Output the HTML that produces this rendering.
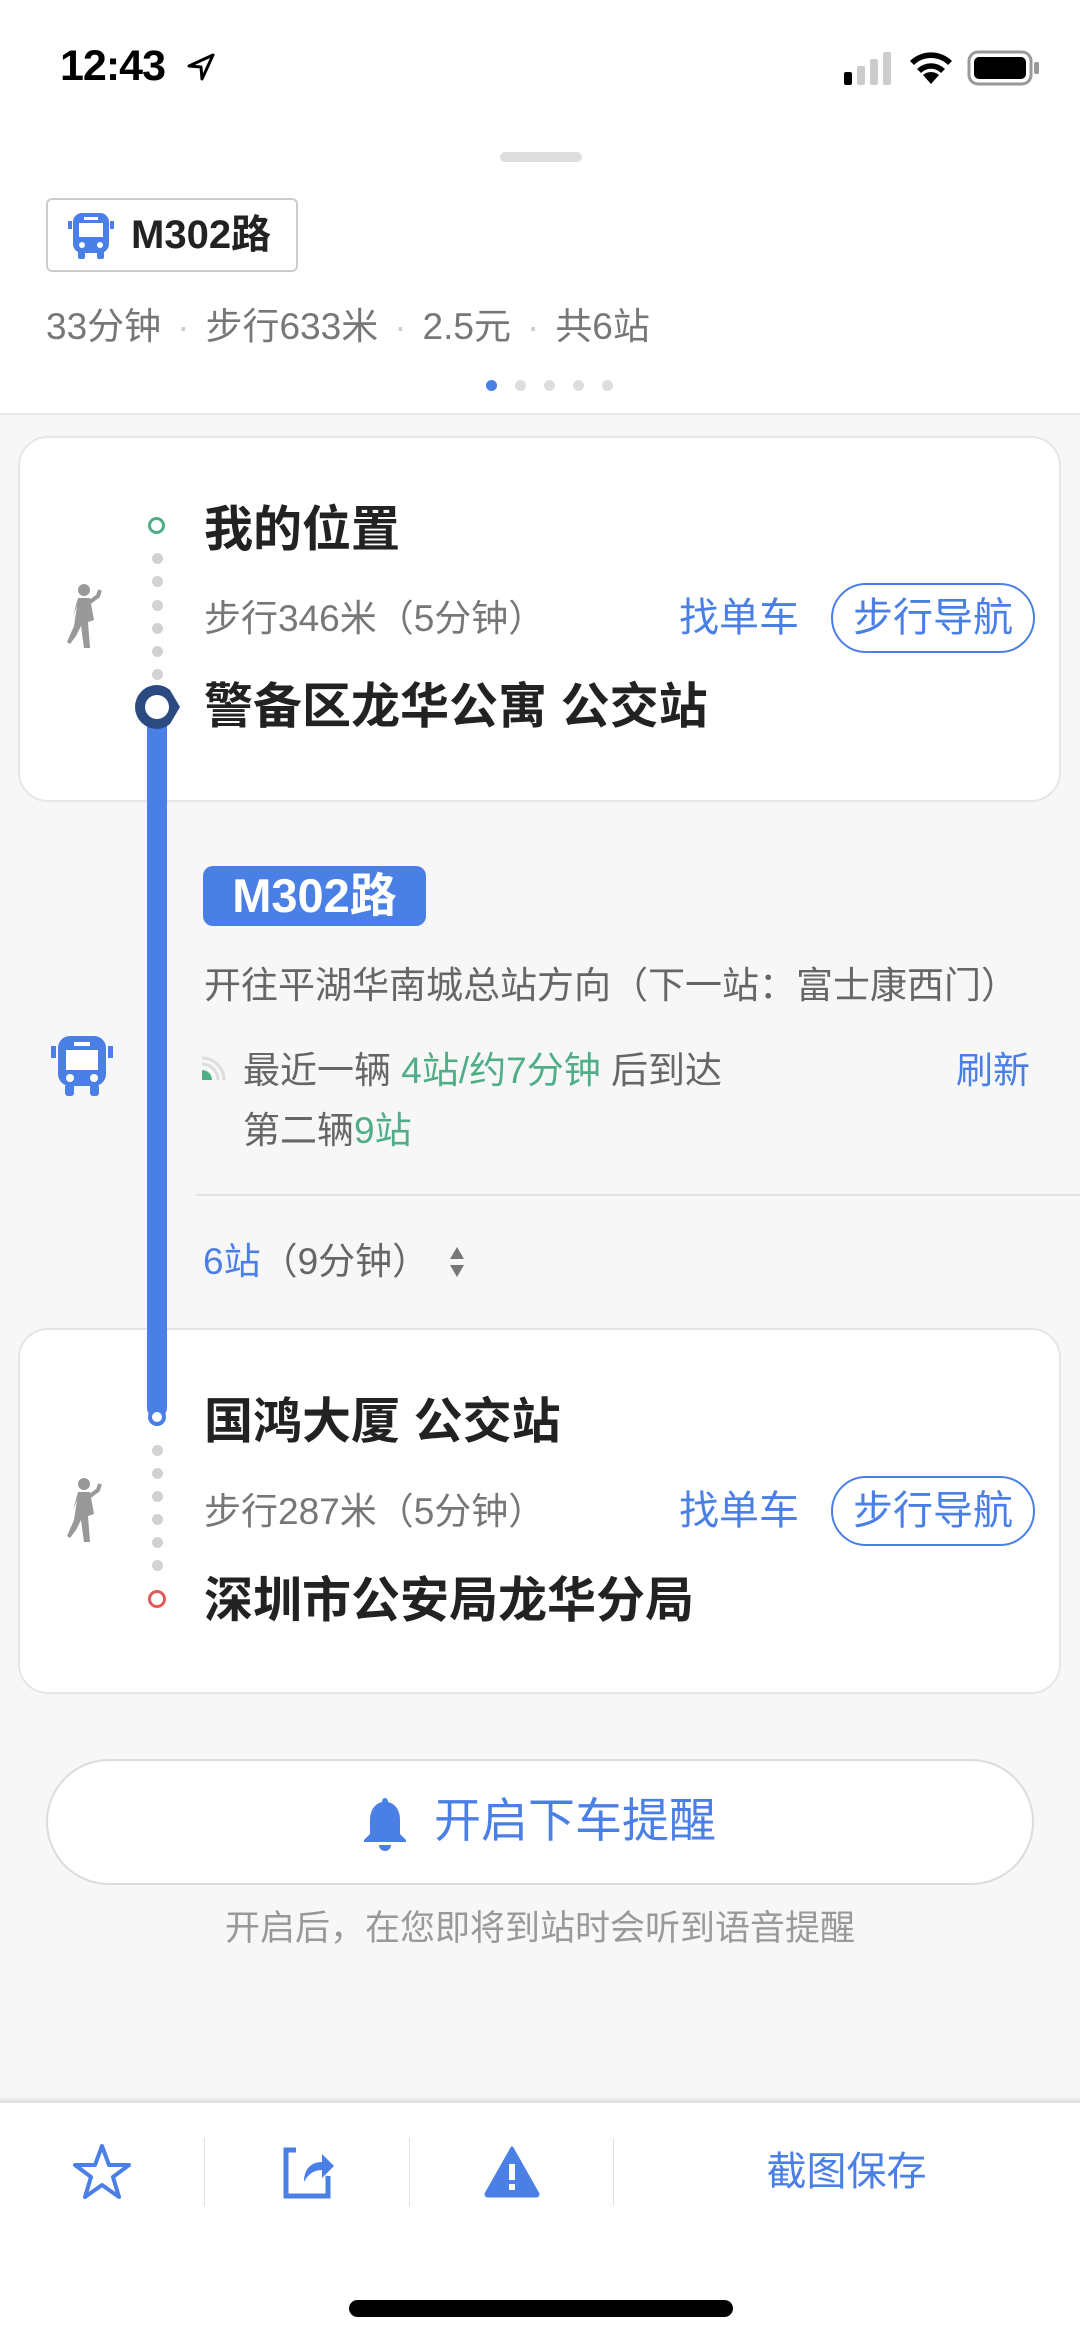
<!DOCTYPE html>
<html><head><meta charset="utf-8"><style>
*{margin:0;padding:0;box-sizing:border-box}
body{width:1080px;height:2339px;position:relative;background:#f7f7f7;font-family:"Liberation Sans","Noto Sans CJK SC",sans-serif;overflow:hidden}
.a{position:absolute;white-space:nowrap}
.t{line-height:60px;height:60px}
.blue{color:#4a7fe6}
.green{color:#4fae87}
.card{position:absolute;left:18px;width:1043px;background:#fff;border:2px solid #e6e6e6;border-radius:30px}
.pill{position:absolute;left:831px;width:204px;height:70px;border:2px solid #4a7fe6;border-radius:35px;color:#4a7fe6;font-size:40px;line-height:66px;text-align:center}
.gd{position:absolute;left:152px;width:11px;height:11px;border-radius:6px;background:#d2d2d2}
.st{font-size:49px;font-weight:bold;color:#222}
</style></head><body>
<div class="a" style="left:0;top:0;width:1080px;height:413px;background:#fff"></div>
<div class="a t" style="left:60px;top:36px;font-size:43px;font-weight:bold;color:#000;letter-spacing:-1px">12:43</div>
<svg class="a" style="left:186px;top:52px" width="30" height="30" viewBox="0 0 30 30"><path d="M27 3 L3 14 L15 15 L16 27 Z" fill="none" stroke="#000" stroke-width="3" stroke-linejoin="round"/></svg>
<svg class="a" style="left:844px;top:50px" width="56" height="36"><rect x="0" y="22" width="8" height="13" rx="2" fill="#000"/><rect x="13" y="16" width="8" height="19" rx="2" fill="#ccc"/><rect x="26" y="9" width="8" height="26" rx="2" fill="#ccc"/><rect x="39" y="2" width="8" height="33" rx="2" fill="#ccc"/></svg>
<svg class="a" style="left:908px;top:48px" width="46" height="38" viewBox="0 0 46 38"><path d="M23 36 L15 27 A12 12 0 0 1 31 27 Z" fill="#000"/><path d="M9 21 A20 20 0 0 1 37 21 L33 25 A14 14 0 0 0 13 25Z" fill="#000"/><path d="M2 13 A30 30 0 0 1 44 13 L40 17 A24 24 0 0 0 6 17Z" fill="#000"/></svg>
<svg class="a" style="left:967px;top:50px" width="74" height="36"><rect x="2" y="2" width="62" height="32" rx="9" fill="none" stroke="#999" stroke-width="3"/><rect x="7" y="7" width="52" height="22" rx="5" fill="#000"/><rect x="67" y="12" width="5" height="12" rx="2" fill="#999"/></svg>
<div class="a" style="left:500px;top:152px;width:82px;height:10px;border-radius:5px;background:#ddd"></div>
<div class="a" style="left:46px;top:198px;width:252px;height:74px;border:2px solid #ccc;border-radius:6px;background:#fff"></div>
<svg class="a" style="left:66px;top:209px" width="50" height="52" viewBox="0 0 50 52"><rect x="7" y="4" width="36" height="40" rx="9" fill="#4a7fe6"/><rect x="13" y="14" width="24" height="14" fill="#fff"/><rect x="18" y="8" width="14" height="3" fill="#fff"/><circle cx="16" cy="36" r="3" fill="#fff"/><circle cx="34" cy="36" r="3" fill="#fff"/><rect x="2" y="12" width="4" height="8" fill="#4a7fe6"/><rect x="44" y="12" width="4" height="8" fill="#4a7fe6"/><rect x="12" y="42" width="7" height="8" rx="2" fill="#4a7fe6"/><rect x="31" y="42" width="7" height="8" rx="2" fill="#4a7fe6"/></svg>
<div class="a t" style="left:131px;top:205px;font-size:40px;font-weight:bold;color:#222">M302路</div>
<div class="a t" style="left:46px;top:297px;font-size:37px;color:#777">33分钟<span style="color:#ccc;padding:0 16px">·</span>步行633米<span style="color:#ccc;padding:0 16px">·</span>2.5元<span style="color:#ccc;padding:0 16px">·</span>共6站</div>
<div class="a" style="left:486px;top:380px;width:11px;height:11px;border-radius:6px;background:#4a7fe6"></div>
<div class="a" style="left:515px;top:380px;width:11px;height:11px;border-radius:6px;background:#ddd"></div>
<div class="a" style="left:544px;top:380px;width:11px;height:11px;border-radius:6px;background:#ddd"></div>
<div class="a" style="left:573px;top:380px;width:11px;height:11px;border-radius:6px;background:#ddd"></div>
<div class="a" style="left:602px;top:380px;width:11px;height:11px;border-radius:6px;background:#ddd"></div>
<div class="a" style="left:0;top:413px;width:1080px;height:2px;background:#e8e8e8"></div>

<div class="card" style="top:436px;height:366px"></div>
<div class="card" style="top:1328px;height:366px"></div>

<div class="a" style="left:147px;top:706px;width:20px;height:712px;background:#4a7fe6;border-radius:0 0 10px 10px"></div>

<!-- card1 -->
<div class="a" style="left:148px;top:517px;width:17px;height:17px;border-radius:50%;border:3px solid #4fae87;background:#fff"></div>
<div class="gd" style="top:553px"></div><div class="gd" style="top:576px"></div><div class="gd" style="top:600px"></div><div class="gd" style="top:623px"></div><div class="gd" style="top:646px"></div><div class="gd" style="top:669px"></div>
<div class="a t st" style="left:204px;top:500px">我的位置</div>
<svg class="a" style="left:64px;top:582px" width="40" height="70" viewBox="0 0 40 70"><circle cx="20" cy="8" r="6" fill="#999"/><path d="M14 16 L26 16 L30 38 L24 40 L26 66 L20 66 L17 44 L12 54 L6 62 L3 60 L10 44 L13 24 L9 34 Z" fill="#999"/><path d="M26 20 L34 14 L36 8" stroke="#999" stroke-width="4" fill="none"/></svg>
<div class="a t" style="left:204px;top:589px;font-size:37px;color:#777">步行346米（5分钟）</div>
<div class="a t blue" style="left:679px;top:588px;font-size:40px">找单车</div>
<div class="pill" style="top:583px">步行导航</div>
<svg class="a" style="left:134px;top:682px" width="52" height="50" viewBox="0 0 52 50"><path d="M23 3 A22 22 0 1 0 23 47 A22 22 0 0 0 36 42 L46 25 L36 8 A22 22 0 0 0 23 3 Z" fill="#2b4a80"/><circle cx="23" cy="25" r="12" fill="#fff"/></svg>
<div class="a t st" style="left:204px;top:677px">警备区龙华公寓 公交站</div>

<!-- bus section -->
<div class="a" style="left:203px;top:866px;width:223px;height:60px;border-radius:10px;background:#4a7fe6;color:#fff;font-size:47px;font-weight:bold;line-height:60px;text-align:center">M302路</div>
<div class="a t" style="left:204px;top:956px;font-size:37px;color:#666">开往平湖华南城总站方向（下一站：富士康西门）</div>
<svg class="a" style="left:50px;top:1032px" width="64" height="66" viewBox="0 0 64 66"><rect x="8" y="4" width="48" height="50" rx="12" fill="#4a7fe6"/><rect x="16" y="18" width="32" height="20" fill="#fff"/><rect x="24" y="10" width="16" height="4" fill="#fff"/><circle cx="20" cy="46" r="4" fill="#fff"/><circle cx="44" cy="46" r="4" fill="#fff"/><rect x="1" y="14" width="5" height="12" fill="#4a7fe6"/><rect x="58" y="14" width="5" height="12" fill="#4a7fe6"/><rect x="15" y="52" width="9" height="12" rx="3" fill="#4a7fe6"/><rect x="40" y="52" width="9" height="12" rx="3" fill="#4a7fe6"/></svg>
<svg class="a" style="left:200px;top:1056px" width="26" height="26" viewBox="0 0 26 26"><path d="M2 24 L2 14 A10 10 0 0 1 12 24 Z" fill="#4fae87"/><path d="M2 8 A16 16 0 0 1 18 24" stroke="#ddd" stroke-width="3" fill="none"/><path d="M2 2 A22 22 0 0 1 24 24" stroke="#ddd" stroke-width="3" fill="none"/></svg>
<div class="a t" style="left:243px;top:1041px;font-size:37px;color:#666">最近一辆 <span class="green">4站/约7分钟</span> 后到达</div>
<div class="a t blue" style="left:956px;top:1041px;font-size:37px">刷新</div>
<div class="a t" style="left:243px;top:1101px;font-size:37px;color:#666">第二辆<span class="green">9站</span></div>
<div class="a" style="left:196px;top:1194px;width:884px;height:2px;background:#e2e2e2"></div>
<div class="a t" style="left:203px;top:1232px;font-size:37px;color:#666"><span class="blue">6站</span>（9分钟）</div>
<svg class="a" style="left:448px;top:1246px" width="18" height="32"><path d="M9 1 L16 13 L2 13 Z M9 31 L16 19 L2 19 Z" fill="#777"/></svg>

<!-- card2 -->
<div class="a" style="left:148px;top:1408px;width:18px;height:18px;border-radius:50%;border:4px solid #4a7fe6;background:#fff"></div>
<div class="gd" style="top:1445px"></div><div class="gd" style="top:1468px"></div><div class="gd" style="top:1491px"></div><div class="gd" style="top:1514px"></div><div class="gd" style="top:1537px"></div><div class="gd" style="top:1560px"></div>
<div class="a t st" style="left:204px;top:1392px">国鸿大厦 公交站</div>
<svg class="a" style="left:64px;top:1476px" width="40" height="70" viewBox="0 0 40 70"><circle cx="20" cy="8" r="6" fill="#999"/><path d="M14 16 L26 16 L30 38 L24 40 L26 66 L20 66 L17 44 L12 54 L6 62 L3 60 L10 44 L13 24 L9 34 Z" fill="#999"/><path d="M26 20 L34 14 L36 8" stroke="#999" stroke-width="4" fill="none"/></svg>
<div class="a t" style="left:204px;top:1482px;font-size:37px;color:#777">步行287米（5分钟）</div>
<div class="a t blue" style="left:679px;top:1481px;font-size:40px">找单车</div>
<div class="pill" style="top:1476px">步行导航</div>
<div class="a" style="left:148px;top:1590px;width:18px;height:18px;border-radius:50%;border:3px solid #e05a5a;background:#fff"></div>
<div class="a t st" style="left:204px;top:1571px">深圳市公安局龙华分局</div>

<!-- reminder -->
<div class="a" style="left:46px;top:1759px;width:988px;height:126px;border:2px solid #dcdcdc;border-radius:63px;background:#fff"></div>
<svg class="a" style="left:360px;top:1796px" width="50" height="56" viewBox="0 0 50 56"><path d="M25 2 C27 2 28 4 28 6 C36 8 40 15 40 24 L40 38 L46 44 L46 46 L4 46 L4 44 L10 38 L10 24 C10 15 14 8 22 6 C22 4 23 2 25 2 Z" fill="#4a7fe6"/><path d="M19 49 L31 49 A6 6 0 0 1 19 49 Z" fill="#4a7fe6"/></svg>
<div class="a t blue" style="left:434px;top:1791px;font-size:47px">开启下车提醒</div>
<div class="a t" style="left:0;width:1080px;text-align:center;top:1899px;font-size:35px;color:#999">开启后，在您即将到站时会听到语音提醒</div>

<!-- bottom bar -->
<div class="a" style="left:0;top:2097px;width:1080px;height:6px;background:linear-gradient(#f4f4f4,#ddd)"></div>
<div class="a" style="left:0;top:2103px;width:1080px;height:236px;background:#fff"></div>
<svg class="a" style="left:72px;top:2142px" width="60" height="60" viewBox="0 0 60 60"><path d="M30 4 L37 23 L57 23 L41 35 L47 55 L30 43 L13 55 L19 35 L3 23 L23 23 Z" fill="none" stroke="#4a7fe6" stroke-width="4" stroke-linejoin="round"/></svg>
<div class="a" style="left:204px;top:2138px;width:1px;height:68px;background:#e2e2e2"></div>
<svg class="a" style="left:280px;top:2144px" width="56" height="56" viewBox="0 0 56 56"><path d="M16 6 L6 6 L6 52 L48 52 L48 32" fill="none" stroke="#4a7fe6" stroke-width="5"/><path d="M24 38 C24 24 32 18 42 18 L42 10 L54 22 L42 34 L42 26 C34 26 28 30 24 38 Z" fill="#4a7fe6"/></svg>
<div class="a" style="left:409px;top:2138px;width:1px;height:68px;background:#e2e2e2"></div>
<svg class="a" style="left:484px;top:2146px" width="56" height="52" viewBox="0 0 56 52"><path d="M28 2 L54 48 Q54 50 52 50 L4 50 Q2 50 2 48 Z" fill="#4a7fe6" stroke="#4a7fe6" stroke-width="3" stroke-linejoin="round"/><rect x="25" y="18" width="6" height="16" fill="#fff"/><rect x="25" y="38" width="6" height="6" fill="#fff"/></svg>
<div class="a" style="left:613px;top:2138px;width:1px;height:68px;background:#e2e2e2"></div>
<div class="a t blue" style="left:613px;width:467px;text-align:center;top:2142px;font-size:40px">截图保存</div>
<div class="a" style="left:349px;top:2300px;width:384px;height:17px;border-radius:9px;background:#000"></div>
</body></html>
